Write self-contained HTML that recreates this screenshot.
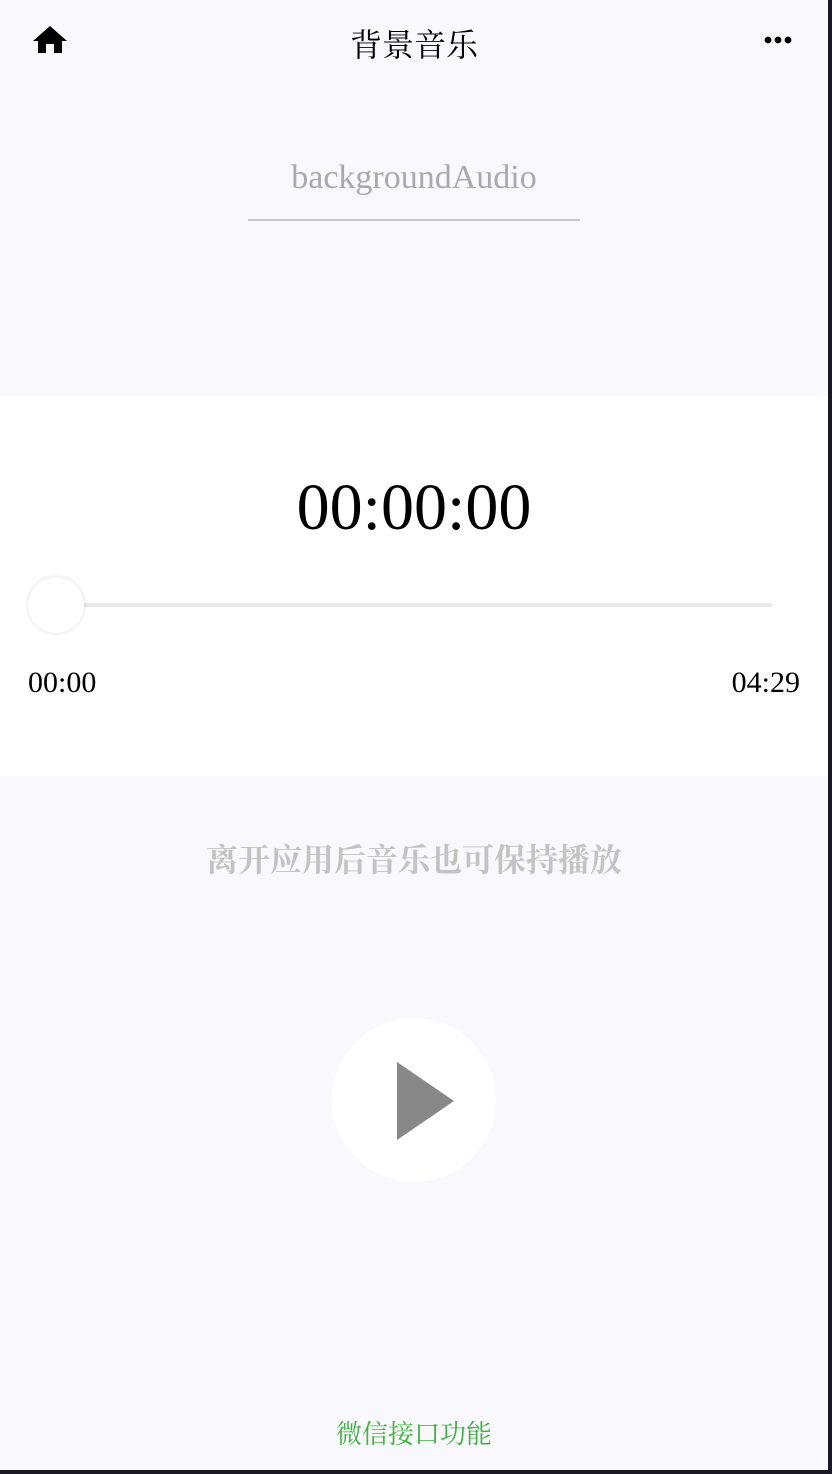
<!DOCTYPE html>
<html><head><meta charset="utf-8"><style>
html,body{margin:0;padding:0}
body{width:832px;height:1474px;background:#1b1a24;position:relative;overflow:hidden;font-family:"Liberation Serif","Noto Serif CJK SC",serif}
#page{position:absolute;left:0;top:0;width:828px;height:1470px;background:#f9f8fc}
.abs{position:absolute}
</style></head><body><div id="page">
<svg class="abs" style="left:33px;top:26px" width="34" height="28" viewBox="0 0 34 28"><path d="M17 0 L0 15 H5 V27 H13 V18 H21 V27 H29 V15 H34 Z" fill="#000"/></svg>
<div class="abs" style="left:0;width:828px;top:20px;text-align:center;font-size:32px;color:#000">背景音乐</div>
<svg class="abs" style="left:764px;top:35px" width="28" height="10"><circle cx="4" cy="5" r="3.4"/><circle cx="14" cy="5" r="3.4"/><circle cx="24" cy="5" r="3.4"/></svg>
<div class="abs" style="left:0;width:828px;top:159px;text-align:center;font-size:34px;color:#a9a9a9">backgroundAudio</div>
<div class="abs" style="left:248px;top:219px;width:332px;height:2px;background:#c8c8c8"></div>
<div class="abs" style="left:0;top:396px;width:828px;height:380px;background:#fff"></div>
<div class="abs" style="left:0;width:828px;top:470px;text-align:center;font-size:66px;color:#000">00:00:00</div>
<div class="abs" style="left:56px;top:603px;width:716px;height:4px;background:#e9e9e9"></div>
<div class="abs" style="left:28px;top:577px;width:56px;height:56px;border-radius:50%;background:#fff;box-shadow:0 0 5px rgba(0,0,0,0.14)"></div>
<div class="abs" style="left:28px;top:666px;font-size:30px;color:#000">00:00</div>
<div class="abs" style="right:28px;top:666px;font-size:30px;color:#000">04:29</div>
<div class="abs" style="left:0;width:828px;top:835px;text-align:center;font-size:32px;color:#c3c3c3;font-weight:bold">离开应用后音乐也可保持播放</div>
<div class="abs" style="left:332px;top:1018px;width:164px;height:164px;border-radius:50%;background:#fff"></div>
<svg class="abs" style="left:396px;top:1062px" width="60" height="78"><path d="M1 0 L58 39 L1 78 Z" fill="#888"/></svg>
<div class="abs" style="left:0;width:828px;top:1414px;text-align:center;font-size:26px;color:#3fb23f">微信接口功能</div>
</div></body></html>
